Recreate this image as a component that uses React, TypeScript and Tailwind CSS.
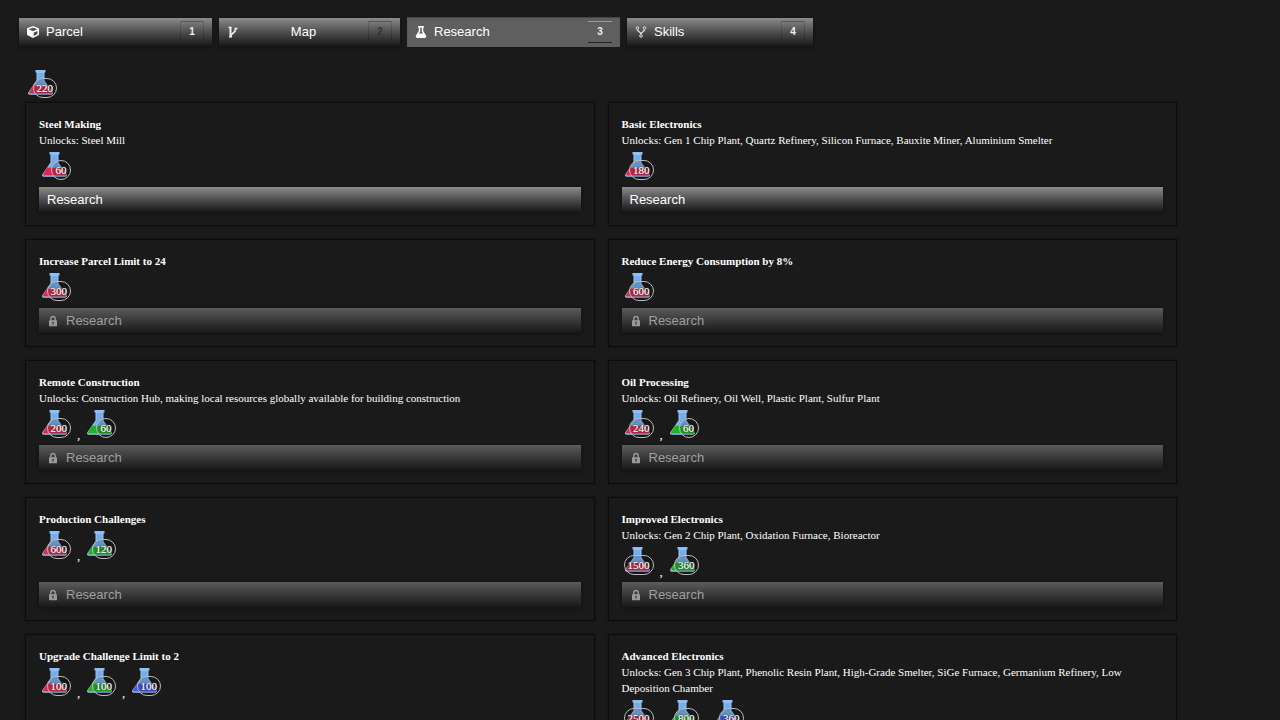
import { FaCube, FaFlask } from 'react-icons/fa';
import type { ReactNode } from 'react';

type Flask = 'red' | 'green' | 'blue';

interface Cost {
  flask: Flask;
  amount: number;
}

interface ResearchItem {
  title: string;
  unlocks?: string;
  costs: Cost[];
  available?: boolean;
}

const FLASK_COLORS: Record<Flask, string> = {
  red: '#e0284e',
  green: '#22b322',
  blue: '#4659e6',
};

const red = (amount: number): Cost => ({ flask: 'red', amount });
const green = (amount: number): Cost => ({ flask: 'green', amount });
const blue = (amount: number): Cost => ({ flask: 'blue', amount });

const RESEARCH: ResearchItem[] = [
  { title: 'Steel Making', unlocks: 'Steel Mill', costs: [red(60)], available: true },
  {
    title: 'Basic Electronics',
    unlocks: 'Gen 1 Chip Plant, Quartz Refinery, Silicon Furnace, Bauxite Miner, Aluminium Smelter',
    costs: [red(180)],
    available: true,
  },
  { title: 'Increase Parcel Limit to 24', costs: [red(300)] },
  { title: 'Reduce Energy Consumption by 8%', costs: [red(600)] },
  {
    title: 'Remote Construction',
    unlocks: 'Construction Hub, making local resources globally available for building construction',
    costs: [red(200), green(60)],
  },
  {
    title: 'Oil Processing',
    unlocks: 'Oil Refinery, Oil Well, Plastic Plant, Sulfur Plant',
    costs: [red(240), green(60)],
  },
  { title: 'Production Challenges', costs: [red(600), green(120)] },
  {
    title: 'Improved Electronics',
    unlocks: 'Gen 2 Chip Plant, Oxidation Furnace, Bioreactor',
    costs: [red(1500), green(360)],
  },
  { title: 'Upgrade Challenge Limit to 2', costs: [red(100), green(100), blue(100)] },
  {
    title: 'Advanced Electronics',
    unlocks:
      'Gen 3 Chip Plant, Phenolic Resin Plant, High-Grade Smelter, SiGe Furnace, Germanium Refinery, Low Deposition Chamber',
    costs: [red(2500), green(800), blue(360)],
  },
];

function FlaskCount({ flask, amount }: Cost) {
  return (
    <span className="relative block h-[39px] w-[38px] shrink-0">
      <svg viewBox="0 0 26 26" className="absolute top-1 left-[3px] size-[26px]">
        <path d="M8.500 2h8v8.500L24.500 22c1 1.500.3 2.800-1.200 2.800H1.700C.2 24.800-.5 23.500.5 22l8-11.500z" fill="#9cc6f2" />
        <path d="M5 15.500h15l4.300 6.800c.4.700 0 1.200-.7 1.200H1.800c-.7 0-1-.5-.6-1.200z" fill={FLASK_COLORS[flask]} />
        <path d="M7.500 0h10v2.500h-10z" fill="#8cc0f4" />
        <path d="M9.500 3h6v8l3 4h-12l3-4z" fill="#74adec" />
      </svg>
      <span className="absolute top-3 right-1.5 flex h-5 min-w-5 items-center justify-center rounded-full border border-[#bbb] bg-black/15 px-[3px] text-[11px] text-white [text-shadow:0_0_2px_#000,0_0_1px_#fff]">
        {amount}
      </span>
    </span>
  );
}

function CostRow({ costs }: { costs: Cost[] }) {
  return (
    <div className="flex">
      {costs.map((cost, i) => (
        <span key={cost.flask} className="flex items-end">
          <FlaskCount {...cost} />
          {i < costs.length - 1 && <span className="w-[7px] text-[13px] leading-5">,</span>}
        </span>
      ))}
    </div>
  );
}

function LockIcon() {
  return (
    <svg viewBox="0 0 10 12" className="mr-2 ml-px h-3 w-[10px]">
      <path d="M2.800 6V3.700a2.200 2.200 0 0 1 4.400 0V6" fill="none" stroke="#999" strokeWidth="1.400" />
      <rect x="1" y="5.300" width="8" height="6" rx="0.500" fill="#999" />
      <path d="M5 7v3M4 7.500h2" stroke="#444" />
    </svg>
  );
}

// Map tab marker: a trunk with one branch
function BranchIcon() {
  return (
    <svg viewBox="0 0 12 12" className="size-3" fill="none" stroke="#eee">
      <path d="M3.500 1v10" strokeWidth="2" />
      <path d="M3.500 9.500C5 7 8 7.500 8.800 3" strokeWidth="1.600" />
      <path d="M1.500 1.500h3M7.500 2.500h3M2 10.800h3" strokeWidth="1.600" />
    </svg>
  );
}

function SkillsIcon() {
  return (
    <svg viewBox="0 0 12 12" className="size-3" fill="none" stroke="#ddd">
      <circle cx="2.500" cy="2" r="1.300" />
      <circle cx="9.500" cy="2" r="1.300" />
      <circle cx="6" cy="10" r="1.300" />
      <path d="M2.500 3.500c0 2.500 3.500 2 3.500 5M9.500 3.500c0 2.500-3.500 2-3.500 5" strokeWidth="1.400" />
    </svg>
  );
}

function ResearchCard({ title, unlocks, costs, available }: ResearchItem) {
  return (
    <li className="flex flex-col border border-[#0c0c0c] p-[13px] shadow-[0_0_2px_#111]">
      <h2 className="font-bold">{title}</h2>
      {unlocks && <p>Unlocks: {unlocks}</p>}
      <CostRow costs={costs} />
      <button
        disabled={!available}
        className="mt-auto flex h-[25px] w-full items-center bg-linear-to-b from-[#8c8c8c] to-[#191919] px-2 font-['Liberation_Sans',sans-serif] text-[13px] text-white shadow-[0_1px_3px_#111] disabled:from-[#5c5c5c] disabled:text-[#a0a0a0]"
      >
        {!available && <LockIcon />}
        Research
      </button>
    </li>
  );
}

interface TabProps {
  label: string;
  hotkey: number;
  icon: ReactNode;
  width: string;
  active?: boolean;
  centered?: boolean;
}

function Tab({ label, hotkey, icon, width, active, centered }: TabProps) {
  return (
    <button
      className={`flex items-center gap-[7px] px-2 text-[13px] text-white ${width} ${
        active
          ? 'h-[30px] bg-[#5f5f5f] shadow-[inset_0_1px_1px_#444]'
          : 'h-7 bg-linear-to-b from-[#8c8c8c] to-[#191919] shadow-[0_1px_3px_#111]'
      }`}
    >
      {icon}
      <span className={`flex-1 ${centered ? 'text-center' : 'text-left'}`}>{label}</span>
      <kbd
        className={`flex h-[22px] w-6 items-center justify-center border-y font-['Liberation_Sans',sans-serif] text-[10px] font-bold ${
          active
            ? 'border-t-[#999] border-b-[#222]'
            : 'border-x border-x-black/15 border-t-black/30 border-b-transparent'
        } ${centered ? 'text-[#333]' : 'text-[#eee]'}`}
      >
        {hotkey}
      </kbd>
    </button>
  );
}

export default function App() {
  return (
    <div className="min-h-screen bg-[#1a1a1a] pt-[17px] pb-6 font-['Liberation_Serif',serif] text-[11px] leading-4 text-white">
      <nav className="flex items-center gap-[7px] pl-[19px] font-['Liberation_Sans',sans-serif]">
        <Tab label="Parcel" hotkey={1} icon={<FaCube className="size-3" />} width="w-[193px]" />
        <Tab label="Map" hotkey={2} icon={<BranchIcon />} width="w-[181px]" centered />
        <Tab label="Research" hotkey={3} icon={<FaFlask className="size-3" />} width="w-[213px]" active />
        <Tab label="Skills" hotkey={4} icon={<SkillsIcon />} width="w-[186px]" />
      </nav>
      <main className="mt-[19px] ml-[25px] w-[90%]">
        <div className="h-9">
          <FlaskCount flask="red" amount={220} />
        </div>
        <ul className="grid grid-cols-2 gap-[13px]">
          {RESEARCH.map((item) => (
            <ResearchCard key={item.title} {...item} />
          ))}
        </ul>
      </main>
    </div>
  );
}
